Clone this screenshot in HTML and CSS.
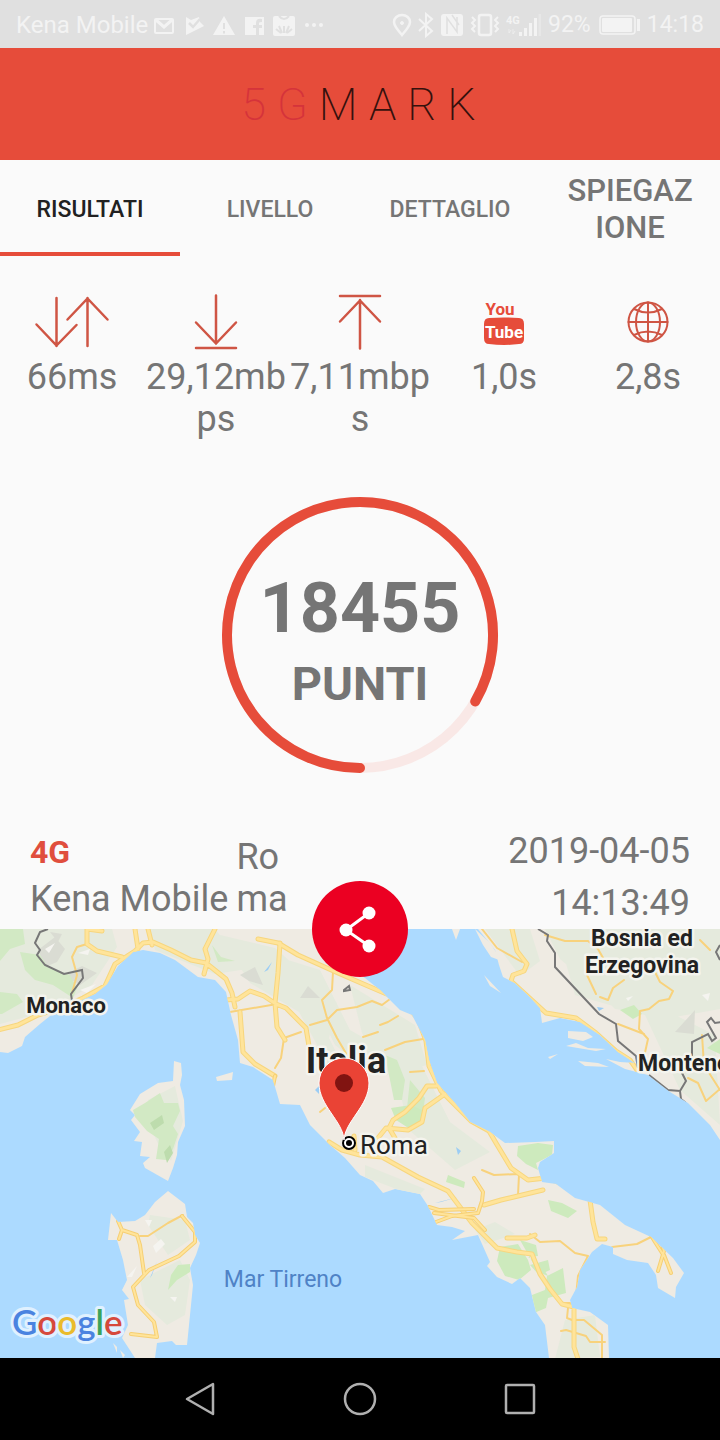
FILE: index.html
```html
<!DOCTYPE html>
<html lang="it">
<head>
<meta charset="utf-8">
<meta name="viewport" content="width=device-width, initial-scale=1">
<title>5GMARK</title>
<link rel="stylesheet" href="styles.css">
</head>
<body>
<div class="screen">
  <div class="status">
    <div class="status-group">
      <span>Kena Mobile</span>
      <svg class="status-left" width="172" height="24" viewBox="152 12 172 24" aria-hidden="true">
        <rect x="155" y="18" width="18" height="14" rx="1" fill="none" stroke="currentColor" stroke-width="2"/>
        <path d="M156 19l8 7 8-7" fill="none" stroke="currentColor" stroke-width="3"/>
        <path d="M186 16l5 3 8-3 1 5 4 4-18 9z" fill="currentColor"/>
        <path d="M189 22l4 4 7-8" fill="none" stroke="#e0e0e0" stroke-width="2.500"/>
        <path d="M224 15l11 19h-22z" fill="currentColor"/>
        <path d="M224 22v6m0 2v2.500" stroke="#e0e0e0" stroke-width="2"/>
        <path d="M245 16h19v18h-5v-7h3v-3h-3v-2q0-1 3-1v-3q-6-1-6 4v2h-3v3h3v7h-11z" fill="currentColor"/>
        <rect x="273" y="15" width="22" height="20" rx="2" fill="currentColor"/>
        <path d="M279 15q5 6 10 0M284 32v-7m-2 7l-3-7m7 7l3-7m-8 7l-5-4m11 4l5-4" stroke="#e0e0e0" stroke-width="2" fill="none"/>
        <g fill="currentColor"><circle cx="307" cy="24" r="2"/><circle cx="314" cy="24" r="2"/><circle cx="321" cy="24" r="2"/></g>
      </svg>
    </div>
    <div class="status-group status-right">
      <svg width="150" height="26" viewBox="392 11 150 26" aria-hidden="true" fill="none" stroke="currentColor" stroke-width="2.500">
        <path d="M403 34q-8-9-8-13a8 7 0 0 1 16 0q0 4-8 13z"/><circle cx="403" cy="22" r="1.500" fill="currentColor" stroke-width="1"/>
        <path d="M420 18l13 12-6 5V13l6 5-13 12" stroke-width="2"/>
        <rect x="442" y="13" width="22" height="22" rx="3" fill="currentColor" stroke="none"/>
        <path d="M448 33V17l10 14V16M453 14l7 10" stroke="#e0e0e0" stroke-width="1.500"/>
        <rect x="480" y="14" width="12" height="20" rx="2"/>
        <path d="M473 16l3 3-3 3 3 3-3 3 3 3M499 16l-3 3 3 3-3 3 3 3-3 3" stroke-width="2"/>
        <path d="M512 29l-2 3v-4m4 0v5l2-3" stroke-width="1" opacity=".6"/>
        <path d="M521.500 35v-4m5 4v-8m5 8V22m5 13V17" stroke-width="3"/>
        <path d="M541 35V13" stroke-width="3" opacity=".35"/>
        <text class="signal-label" x="507" y="23">4G</text>
      </svg>
      <span>92%</span>
      <svg width="42" height="24" viewBox="596 12 42 24" aria-hidden="true" fill="none" stroke="currentColor">
        <rect x="598" y="15" width="35" height="18" rx="3" stroke-width="1.500"/><rect x="600" y="17" width="30" height="14" rx="1" fill="currentColor" stroke="none"/><path d="M636.500 18v12" stroke-width="3"/>
      </svg>
      <span>14:18</span>
    </div>
  </div>

  <header class="appbar"><h1 class="brand"><span class="brand-accent">5G</span>MARK</h1></header>

  <nav class="tabs" role="tablist">
    <button class="tab tab-active" role="tab" aria-selected="true">RISULTATI</button>
    <button class="tab" role="tab" aria-selected="false">LIVELLO</button>
    <button class="tab" role="tab" aria-selected="false">DETTAGLIO</button>
    <button class="tab tab-large" role="tab" aria-selected="false">SPIEGAZIONE</button>
  </nav>

  <main class="results">
    <section class="metrics">
      <div class="metric">
        <svg width="76" height="68" viewBox="34 288 76 68" class="line-icon" aria-hidden="true"><path d="M56.500 298v48M36.500 324.500l20 21 20-20.500M87.500 346v-48M67.500 319.500l20-21 20 21"/></svg>
        <span>66ms</span>
      </div>
      <div class="metric">
        <svg width="76" height="68" viewBox="178 288 76 68" class="line-icon" aria-hidden="true"><path d="M216 295.500v48M196 322.500l20 21 20-21M196 348h40"/></svg>
        <span>29,12mbps</span>
      </div>
      <div class="metric">
        <svg width="76" height="68" viewBox="322 288 76 68" class="line-icon" aria-hidden="true"><path d="M360 348.500V300M340 321.500l20-21 20 21M340 296h40"/></svg>
        <span>7,11mbps</span>
      </div>
      <div class="metric">
        <svg width="76" height="68" viewBox="466 288 76 68" role="img" aria-label="YouTube">
          <text class="yt" x="500" y="315">You</text>
          <path d="M489 318q15-1 30 0 5 0 5 6v15q0 5-5 5-15 2-30 0-5 0-5-6v-14q0-6 5-6z" fill="#e64c3a"/>
          <text class="yt yt-light" x="504" y="338">Tube</text>
        </svg>
        <span>1,0s</span>
      </div>
      <div class="metric">
        <svg width="76" height="68" viewBox="610 288 76 68" class="line-icon globe" aria-hidden="true"><circle cx="648" cy="322" r="19.500"/><ellipse cx="648" cy="322" rx="12" ry="19.500"/><path d="M648 302.500v39M628.500 322h39M634 309q14 7 28 0M634 335q14-7 28 0"/></svg>
        <span>2,8s</span>
      </div>
    </section>

    <section class="gauge">
      <svg class="gauge-ring" viewBox="0 0 278 278" aria-hidden="true">
        <circle cx="139" cy="139" r="133" fill="none" stroke="#f9e8e6" stroke-width="10"/>
        <path d="M139 272A133 133 0 1 1 254.200 205.500" fill="none" stroke="#e64c3a" stroke-width="10" stroke-linecap="round"/>
      </svg>
      <div class="gauge-text"><strong class="score">18455</strong><span class="unit">PUNTI</span></div>
    </section>

    <section class="info">
      <div class="carrier"><span class="network">4G</span><span>Kena Mobile</span></div>
      <div class="city">Roma</div>
      <div class="stamp"><span>2019-04-05</span><span>14:13:49</span></div>
    </section>
  </main>

  <section class="map">
    <svg class="map-canvas" viewBox="0 929 720 429" preserveAspectRatio="xMidYMid slice" role="img" aria-label="Mappa">
      <defs>
        <path id="italy" d="M0 929V1052L8 1053 22 1046 25 1037 40 1024 55 1012 95 994 107 984 118 966 133 952 143 950 160 953 175 960 198 977 215 980 226 992 231 1015 238 1040 240 1063 253 1067 273 1080 280 1104 300 1105 310 1125 330 1145 345 1158 360 1175 373 1181 383 1193 395 1189 420 1194 428 1206 437 1225 452 1227 465 1231 452 1240 478 1235 490 1262 487 1266 497 1277 512 1284 520 1278 530 1288 536 1312 545 1325 549 1358H609L608 1325 590 1312 572 1308 570 1300 577 1287 580 1270 592 1252 602 1244 613 1247 613 1254 627 1260 648 1263 656 1275 658 1288 675 1298 676 1287 684 1273 673 1258 651 1237 625 1225 600 1205 575 1198 556 1184 542 1182 538 1168 540 1162 554 1153 554 1141 535 1142 505 1143 490 1132 470 1122 455 1103 437 1083 429 1060 425 1040 412 1015 400 1010 380 990 365 978 330 955 325 929z"/>
        <path id="balkans" d="M478 929L495 950 499 965 503 977 515 983 530 997 540 1008 542 1023 560 1018 580 1022 600 1035 618 1052 635 1063 620 1062 606 1059 625 1069 648 1075 670 1092 688 1103 700 1115 710 1125 720 1140V929z"/>
        <path id="corsica" d="M174 1061L181 1063 182 1075 180 1085 184 1100 185 1126 178 1142 177 1155 173 1168 168 1181 145 1168 143 1163 150 1157 140 1156 142 1142 134 1141 140 1132 131 1120 135 1115 130 1110 140 1094 158 1083 173 1081z"/>
        <path id="sardinia" d="M168 1191L185 1204 187 1217 193 1223 195 1235 200 1243 196 1255 190 1268 193 1285 187 1345 176 1345 172 1341 157 1343 155 1358H135L122 1338 128 1325 124 1300 129 1299 122 1290 127 1280 123 1260 117 1240 108 1240 111 1213 118 1222 135 1221 145 1215 155 1202z"/>
        <clipPath id="landclip"><use href="#italy"/><use href="#balkans"/><use href="#corsica"/><use href="#sardinia"/></clipPath>
      </defs>
      <rect y="929" width="720" height="429" fill="#acdaff"/>
      <g fill="#efebe3"><use href="#italy"/><use href="#balkans"/><use href="#corsica"/><use href="#sardinia"/>
        <path d="M216 1077l17-5-1 8-15 1zM452 929h8l-4 11zM568 1031l18 1 7 5-10 4-15-3zM566 1046l10-3 12 5 18 1-10 2zM578 1061l20 2 11 4-24-1zM548 1057l10-3-8 5zM484 975l17 18-11-7zM475 929l15 14 12 18-11-4-8-12zM113 1343l4 4v6zM120 1350l5 5-2 3z"/>
      </g>
      <g clip-path="url(#landclip)">
        <g fill="#e5eadd">
          <path d="M0 929h112l5 18-25 38-40 25-52 14zM150 929h65l32 40-32 5-60-24zM220 935l55 13 62 55-8 35 20 40-18-8-32-58-49-29zM272 955l48 15 30 60 35 20-10 25-40-30-15-30-38-25zM350 985l65 40 12 40-40 10-25-42zM390 1050l30 12 30 60 40 30-35 18-46-40zM485 929h45l10 32-20 15zM545 929h175v80l-45 8-60-8-25-25-30-25zM565 960l150 75 5 90-40-35-35-75-70-20z"/>
          <path d="M148 1100l27-14 8 35-12 40-12-15-9-20zM150 1215l35 5 5 20-22 15-20-30zM140 1280l40-20 10 20-5 35-18 10-22-20zM365 1165l60 24-8 8-52-20zM475 1230l20-8 20 12-30 10zM565 1320l30-5 5 42-45 2z"/>
        </g>
        <g fill="#dadcd3"><path d="M38 950l17-13 10 12-8 13-12 5zM64 975l18-9 15 7-17 12zM50 932l12 2-4 8zM300 998l8-12 12 12zM240 975l15-8 8 18-14-4zM638 965l35-10-13 15zM675 1032l20-22-1 24z"/></g>
        <g fill="#d2e9c4"><path d="M0 929h23l2 15-15 5-10 12zM20 952l20 3 8 12 22 8 7 13-4 10-20-13-18-5-10-10zM0 992l17 2 6 8-21 12h-2zM212 945l9 12 14 4-17 1zM133 1110l12-7 15-10 4 10 14 0 2 8-7 15 5 8-5 15-7 11-10-1 3-20-12-8-12-14zM410 1080l15 18-2 15-16-5zM385 1055l12 5 8 20-3 20-8 0z"/></g>
        <g fill="#cdeabd"><path d="M411 1105l13 6 0 10-14 8-14-9-5-12zM518 1146l20-3 15 2-1 10-16 8 2 7-12-6-9-8zM448 1175l17 7-1 6-18-6zM548 1200l14 3 15 8-9 7-17-7zM500 1247l18-3 10 16 3 10-12 10-14-4-8-15zM520 1240l16 5 2 11-10 1 14 9 6 10-10-4zM530 1265l18-5 2 10-11 5zM545 1290l2-14 16-8 3 25-18 5-2 10-12 5-2-18zM178 1265l12-1v8l-13 8-9 10 3-15zM620 1010l14-5 8 9-9 5zM707 1048l13-9v15z"/></g>
        <g fill="#bddcad"><path d="M150 1123l12-8 2 8-10 7zM164 1152l6-7 3 8-6 10z"/></g>
        <g fill="#f5f4f0"><path d="M153 1246l8-7 4 5-9 9zM145 1220l7 0-3 7zM45 949l10-6-6 10zM78 953l12-4-2 6zM80 990l16-6-9 9zM98 988l10-4-5 6zM127 1277l10-11-5 11zM170 1297l7 0-2 5zM702 995l8-2-2 8zM626 998l7-2-5 5z"/></g>
        <path d="M264 972l8-10-4 8zM315 1090l4-4v8zM456 1147l5 4-3 4zM435 1203l23-6-17 5zM597 1007l7 1-5 3zM150 1278l7-17-5 14z" fill="#9ccdf4"/>

        <g class="road road-thin">
          <path d="M72 957l5-10 10-3M72 957l5 18-5 18M230 1012l47-8M277 1004l-1 20 8 14-3 20-6 10M284 1038l17-6M333 972l-1 18-10 10 5 18 10 20 10 17M310 1025l17-5 10-10 20-3 15-6 10 4 12-9M380 1025l8-3 10-6M363 1037l15-5M385 1050l20-8 18-3M410 1072l14-1M320 1112l5-4"/>
          <path d="M482 929l15 19 25 14M545 935l20 6h23l10 8 8 14M587 975l9 19M600 997l8 3 5-12 11-8M655 972l5 10 13 9-4 8-10 2-10 8-9 2-1 18 9 10-4 18-4 8M618 1024l26 10M700 940l10 10M688 1078l10 5 8 18 14-12M702 1035l2 30 16 25M530 1234l10 8 20-1 15 12 13 3-10 20-2 20-8 12-1 10 5 2h12l18 15v35M612 1247l25-3 14-7M561 1331l5-1 20 6 4 6h15M562 1303h10M519 1175l-1 20M482 1170l12 5 24-1M140 1236l8 0 20-13 15-8"/>
        </g>
        <g class="road road-casing">
          <path id="r1" d="M-2 1030l20-5 20-10 25-8 20-9 22-12 10-22 20-13 8-8 10-1 18 8 20 10 15 3 20 16 6 14 3 14M135 929l3 20M148 929l4 16M215 929l-10 20 3 10-4 15M87 929v15l10 7 25 6M87 929l15 2M258 939l20 4 20 12 40 18 30 13 35 15 15 18 8 22 3 25 12 25 30 30 18 10 7 12 15 25 17 12 18-2 28 10 25 10"/>
          <path id="r2" d="M226 1000l12-1 12-8 14 5 12 8 10 4 20 20 3 18M280 943l-2 30-3 30 2 24 8 13M240 1012l3 40 12 12 20 12M329 1142l13 8 18 5 22 2 36 20 30 14 9 12 15 20 25 25 20 4 15 2 8 20 10 15 12 15 12 3v40l5 15-7 12M378 1138l8-10 22 2 14-8 3-14 20-14M395 1138l-6-10 4-8 12-8 14-14 8-12 9 0M355 1150l-1-14M484 1205l17-5 17-4 25-6M590 1200l3 22 4 17h8M507 1238h20l8-3"/>
        </g>
        <g class="road road-fill"><use href="#r1"/><use href="#r2"/></g>
        <g class="road road-casing-slim">
          <path id="r3" d="M118 1221l4 9 15 5 3 10 4 28M122 1230l-3 9M182 1216l13 16v10l-16 14-30 14-16 17 5 18 16 17 3 15-26-3M429 1207l10 3 35-1M436 1222l16-6 26-3 4-12 1-9-9-14M434 1213l40 5 11 12M660 1237l4 14-6 20M664 1255l7 18M625 1220l24 12 6 10 9 14M275 1076l-3 15"/>
        </g>
        <g class="road road-fill-slim"><use href="#r3"/></g>
        <g class="road road-casing">
          <path id="r4" d="M512 929l5 22 10 13-3 7-11 4-2 6 35 32 30 5 20 15 20 18 14 9 7 10"/>
        </g>
        <g class="road road-fill"><use href="#r4"/></g>
        <g class="border"><path d="M48 929l-8 3-5 11 5 7-3 5 8 10 19 9 18-4 1 8-12 16 1 7M538 929l10 6-1 6 8 12v14l44 47 17 10 2 17 18 15 2 12M649 1075l19 15 12 1 6-10-6-12M680 1091l1 8 5 4M692 1057v-15l16-8 4 7 4-3-9-16 4-4 4 5 6-1M720 945l-4 7 4 8M344 990l5-4 1 4-6 1z"/></g>
      </g>

      <g class="place">
        <text class="place-small" x="66" y="1013">Monaco</text>
        <text x="642" y="946">Bosnia ed</text>
        <text x="642" y="973">Erzegovina</text>
        <text class="place-start" x="638" y="1071">Montene</text>
        <text class="country" x="346" y="1073">Italia</text>
        <text class="town" x="360" y="1154">Roma</text>
      </g>
      <text class="sea" x="283" y="1287">Mar Tirreno</text>
      <circle cx="349" cy="1143" r="6" fill="#fff" stroke="#000" stroke-width="2"/><circle cx="349" cy="1143" r="3" fill="#000"/>
      <path d="M344 1140C343 1121 319 1106 319 1083a25 25 0 0 1 50 0C369 1106 345 1121 344 1140z" fill="#ea4335" stroke="#fff" stroke-width="1"/>
      <circle cx="344" cy="1083" r="9" fill="#811411"/>
      <text class="google" x="12" y="1335"><tspan fill="#4a83e0">G</tspan><tspan fill="#d6493c">o</tspan><tspan fill="#eabb2c">o</tspan><tspan fill="#4a83e0">g</tspan><tspan fill="#3aa35b">l</tspan><tspan fill="#d6493c">e</tspan></text>
    </svg>
    <button class="share" aria-label="Condividi">
      <svg width="48" height="56" viewBox="0 0 48 56" aria-hidden="true"><path d="M33 12L10 29l23 16" fill="none" stroke="#fff" stroke-width="3"/><g fill="#fff"><circle cx="33" cy="12" r="6.500"/><circle cx="10" cy="29" r="6.500"/><circle cx="33" cy="45" r="6.500"/></g></svg>
    </button>
  </section>

  <nav class="softkeys">
    <button class="softkey" aria-label="Indietro"><svg width="40" height="40" viewBox="0 0 40 40"><path d="M33 5v30L7 20z"/></svg></button>
    <button class="softkey" aria-label="Home"><svg width="40" height="40" viewBox="0 0 40 40"><circle cx="20" cy="20" r="15"/></svg></button>
    <button class="softkey" aria-label="Recenti"><svg width="40" height="40" viewBox="0 0 40 40"><rect x="6" y="6" width="28" height="28" rx="1"/></svg></button>
  </nav>
</div>
</body>
</html>
```
FILE: styles.css
```css
* { box-sizing: border-box; }
body { margin: 0; background: #fafafa; color: #757575; font-family: Roboto, "Liberation Sans", sans-serif; }
button { margin: 0; padding: 0; border: 0; background: none; font: inherit; color: inherit; }
svg { display: block; }
.screen { display: flex; flex-direction: column; min-height: 100vh; }

.status { display: flex; justify-content: space-between; align-items: center; height: 48px; padding: 2px 16px 0; background: #e0e0e0; color: #f3f3f3; font-size: 24px; line-height: 28px; }
.status-group { display: flex; align-items: center; gap: 4px; }
.status-right { gap: 7px; font-size: 23px; }
.signal-label { font-size: 11px; font-weight: 700; fill: currentColor; stroke: none; }

.appbar { display: flex; align-items: center; justify-content: center; height: 112px; background: #e64c3a; }
.brand { margin: 0; padding: 2px 0 0 8px; font-size: 45px; line-height: 56px; font-weight: 200; letter-spacing: 11px; color: #35110d; }
.brand-accent { color: #d5333a; }

.tabs { display: grid; grid-template-columns: repeat(4, 1fr); height: 96px; }
.tab { padding: 8px 24px 0; border-bottom: 4px solid transparent; font-size: 23px; line-height: 28px; font-weight: 500; }
.tab-active { color: #212121; border-bottom-color: #e64c3a; }
.tab-large { padding-top: 6px; font-size: 31px; line-height: 37px; word-break: break-all; }

.metrics { display: grid; grid-template-columns: repeat(5, 1fr); padding-top: 32px; }
.metric { display: flex; flex-direction: column; align-items: center; font-size: 36px; line-height: 42px; text-align: center; word-break: break-all; }
.line-icon { fill: none; stroke: #cf5544; stroke-width: 2.5; stroke-linecap: round; }
.globe { stroke-width: 2; }
.yt { font-size: 17px; font-weight: 700; fill: #e64c3a; text-anchor: middle; }
.yt-light { fill: #fff; }

.gauge { display: grid; justify-content: center; align-items: center; grid-template-columns: 278px; padding: 56px 0 51px; }
.gauge-ring, .gauge-text { grid-area: 1 / 1; }
.gauge-text { display: flex; flex-direction: column; align-items: center; padding-top: 14px; }
.score { font-size: 70px; line-height: 84px; font-weight: 700; }
.unit { font-size: 47px; line-height: 68px; font-weight: 700; }

.info { display: flex; align-items: flex-end; gap: 8px; padding: 0 30px; font-size: 36px; line-height: 42px; }
.carrier { display: flex; flex-direction: column; gap: 8px; padding-bottom: 9px; white-space: nowrap; }
.network { font-size: 32px; line-height: 36px; font-weight: 700; color: #e04e3d; }
.city { width: 56px; padding-bottom: 9px; word-break: break-all; }
.stamp { display: flex; flex-direction: column; margin-left: auto; text-align: right; line-height: 52px; }

.map { position: relative; flex: 1; display: flex; min-height: 400px; }
.map-canvas { flex: 1; width: 100%; }
.road { fill: none; stroke-linejoin: round; stroke-linecap: round; }
.road-casing { stroke: #f7d67e; stroke-width: 5; }
.road-fill { stroke: #ffe49a; stroke-width: 3; }
.road-casing-slim { stroke: #f6cf74; stroke-width: 4; }
.road-fill-slim { stroke: #ffe49a; stroke-width: 2; }
.road-thin { stroke: #f8d27c; stroke-width: 2; }
.border { fill: none; stroke: #777; stroke-width: 2; }
.place text { font-size: 23px; font-weight: 700; fill: #222; text-anchor: middle; stroke: #f4f4ee; stroke-width: 5; stroke-linejoin: round; paint-order: stroke; }
.place .place-small { font-size: 22px; }
.place .place-start { text-anchor: start; }
.place .country { font-size: 36px; }
.place .town { font-size: 26px; font-weight: 400; text-anchor: start; }
.sea { font-size: 23px; fill: #4f82c6; text-anchor: middle; }
.google { font-family: Lato, sans-serif; font-size: 35px; font-weight: 600; stroke: #e0f1ff; stroke-width: 6; stroke-linejoin: round; paint-order: stroke; }
.share { position: absolute; top: -48px; left: 50%; margin-left: -48px; display: flex; align-items: center; justify-content: center; width: 96px; height: 96px; border-radius: 50%; background: #eb0022; }

.softkeys { display: flex; justify-content: center; align-items: center; height: 82px; background: #000; }
.softkey { display: flex; justify-content: center; width: 160px; }
.softkey svg { fill: none; stroke: #b0b0b0; stroke-width: 2.5; stroke-linejoin: round; }
```
